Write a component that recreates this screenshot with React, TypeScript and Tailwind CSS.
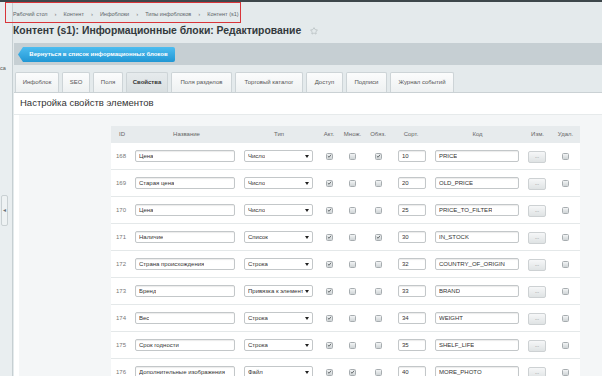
import { Star } from "lucide-react"

type Row = {
  id: number
  name: string
  type: string
  act: boolean
  multi: boolean
  req: boolean
  sort: number
  code: string
}

const rows: Row[] = [
  { id: 168, name: "Цена", type: "Число", act: true, multi: false, req: true, sort: 10, code: "PRICE" },
  { id: 169, name: "Старая цена", type: "Число", act: true, multi: false, req: false, sort: 20, code: "OLD_PRICE" },
  { id: 170, name: "Цена", type: "Число", act: true, multi: false, req: false, sort: 25, code: "PRICE_TO_FILTER" },
  { id: 171, name: "Наличие", type: "Список", act: true, multi: false, req: true, sort: 30, code: "IN_STOCK" },
  { id: 172, name: "Страна происхождения", type: "Строка", act: true, multi: false, req: false, sort: 32, code: "COUNTRY_OF_ORIGIN" },
  { id: 173, name: "Бренд", type: "Привязка к элемент", act: true, multi: false, req: false, sort: 33, code: "BRAND" },
  { id: 174, name: "Вес", type: "Строка", act: true, multi: false, req: false, sort: 34, code: "WEIGHT" },
  { id: 175, name: "Срок годности", type: "Строка", act: true, multi: false, req: false, sort: 35, code: "SHELF_LIFE" },
  { id: 176, name: "Дополнительные изображения", type: "Файл", act: true, multi: true, req: false, sort: 40, code: "MORE_PHOTO" },
]

const crumbs = ["Рабочий стол", "Контент", "Инфоблоки", "Типы инфоблоков", "Контент (s1)"]

const tabs = [
  { label: "Инфоблок", w: "w-[44px]" },
  { label: "SEO", w: "w-[28px]" },
  { label: "Поля", w: "w-[30px]" },
  { label: "Свойства", w: "w-[42px]", active: true },
  { label: "Поля разделов", w: "w-[61px]" },
  { label: "Торговый каталог", w: "w-[68px]" },
  { label: "Доступ", w: "w-[37px]" },
  { label: "Подписи", w: "w-[41px]" },
  { label: "Журнал событий", w: "w-[64px]" },
]

const cols = "grid grid-cols-[22px_107px_78px_22px_25px_26px_40px_93px_27px_29px]"

function Checkbox({ checked }: { checked?: boolean }) {
  return (
    <span className="flex h-[7px] w-[7px] items-center justify-center rounded-[1.5px] border border-[#a7adb0] bg-gradient-to-b from-[#f2f4f5] to-[#cfd4d6]">
      {checked && (
        <svg width="6" height="6" viewBox="0 0 6 6">
          <path d="M1 3.1 L2.5 4.5 L5 1.3" fill="none" stroke="#4a5054" strokeWidth="1" />
        </svg>
      )}
    </span>
  )
}

function Field({ value, className }: { value: string | number; className: string }) {
  return (
    <div
      className={`flex h-[12px] items-center rounded-[2px] border border-[#c3c7c9] bg-white pl-[3px] text-[6px] text-[#333] shadow-[inset_0_1px_1px_rgba(0,0,0,0.08)] ${className}`}
    >
      <span className="truncate">{value}</span>
    </div>
  )
}

export default function App() {
  return (
    <div className="relative flex h-[376px] w-[602px] flex-col overflow-hidden bg-[#e4eaec] font-['Liberation_Sans',Arial,sans-serif] text-[#333]">
      <div className="h-[2px] shrink-0 bg-[#3d474b]" />

      <div className="flex min-h-0 flex-1">
        {/* collapsed side menu */}
        <aside className="relative w-[13px] shrink-0 overflow-hidden border-r border-[#c6cfd2] bg-[#e9eef0]">
          <div className="mt-[64px] text-[5.5px] leading-none text-[#555]">са</div>
          <div className="absolute left-[1px] top-[193px] flex h-[31px] w-[7px] items-center justify-center rounded-[2px] border border-[#c9d0d3] bg-[#eef2f3] text-[6px] text-[#6b7377]">
            ◂
          </div>
        </aside>

        <main className="flex min-w-0 flex-1 flex-col">
          {/* breadcrumbs */}
          <nav className="mt-[6px] flex h-[12px] items-center gap-[7px] text-[5.5px] text-[#5c6468]">
            {crumbs.map((c, i) => (
              <div key={c} className="flex items-center gap-[7px]">
                <span>{c}</span>
                {i < crumbs.length - 1 && <span className="text-[6px] text-[#777]">›</span>}
              </div>
            ))}
          </nav>

          {/* title */}
          <div className="mt-[4px] flex h-[14px] items-center gap-[9px]">
            <h1 className="text-[10.4px] font-bold text-[#33393c]">
              Контент (s1): Информационные блоки: Редактирование
            </h1>
            <Star size={8} strokeWidth={1.6} className="text-[#a3abae]" />
          </div>

          {/* toolbar */}
          <div className="mt-[5px] ml-px h-[22px] shrink-0 bg-[#c6cfd3] pl-[4px] pt-[4px]">
            <button className="flex h-[15px] w-[157px] items-center justify-center rounded-r-[2px] bg-gradient-to-b from-[#4dbdf0] to-[#1f97d4] pl-[4px] text-[6px] font-bold text-white [clip-path:polygon(5px_0,100%_0,100%_100%,5px_100%,0_50%)]">
              Вернуться в список информационных блоков
            </button>
          </div>

          {/* tabs */}
          <div className="mt-[7px] ml-[2px] flex h-[20px] shrink-0 gap-[3px]">
            {tabs.map((t) => (
              <div
                key={t.label}
                className={`${t.w} flex items-center justify-center rounded-t-[2px] border border-b-0 border-[#cdd4d7] text-[6px] ${
                  t.active
                    ? "bg-gradient-to-b from-[#e6ebed] to-[#d9dfe1] font-bold text-[#333]"
                    : "bg-gradient-to-b from-[#fbfcfc] to-[#eef1f2] text-[#555]"
                }`}
              >
                {t.label}
              </div>
            ))}
          </div>

          {/* panel */}
          <section className="ml-px flex min-h-0 flex-1 flex-col border-t border-[#cad1d4] bg-white">
            <div className="flex h-[22px] shrink-0 items-center border-b border-[#e6eaeb] pl-[6px] text-[9.5px] text-[#333]">
              Настройка свойств элементов
            </div>

            <div className="ml-[5px] flex-1 bg-[#f4f6f7] pt-[11px] pl-[92px]">
              <div className="w-[469px] bg-white">
                <div className={`${cols} h-[17px] items-center bg-[#e7ebed] text-[6px] text-[#666]`}>
                  <span className="text-center">ID</span>
                  <span className="text-center">Название</span>
                  <span className="text-center">Тип</span>
                  <span className="text-center">Акт.</span>
                  <span className="text-center">Множ.</span>
                  <span className="text-center">Обяз.</span>
                  <span className="text-center">Сорт.</span>
                  <span className="text-center">Код</span>
                  <span className="text-center">Изм.</span>
                  <span className="text-center">Удал.</span>
                </div>

                {rows.map((r) => (
                  <div key={r.id} className={`${cols} h-[27px] items-center border-b border-[#e4e8e9]`}>
                    <span className="pl-[5px] text-[6px] text-[#777]">{r.id}</span>
                    <div className="pl-[2px]">
                      <Field value={r.name} className="w-[100px]" />
                    </div>
                    <div className="pl-[4px]">
                      <div className="flex h-[12px] w-[69px] items-center justify-between rounded-[2px] border border-[#c3c7c9] bg-white pl-[3px] pr-[3px] text-[6px] text-[#333]">
                        <span className="truncate">{r.type}</span>
                        <svg width="4" height="3" viewBox="0 0 4 3" className="shrink-0">
                          <path d="M0 0 L4 0 L2 3 Z" fill="#222" />
                        </svg>
                      </div>
                    </div>
                    <div className="flex justify-center">
                      <Checkbox checked={r.act} />
                    </div>
                    <div className="flex justify-center">
                      <Checkbox checked={r.multi} />
                    </div>
                    <div className="flex justify-center">
                      <Checkbox checked={r.req} />
                    </div>
                    <div className="pl-[7px]">
                      <Field value={r.sort} className="w-[28px]" />
                    </div>
                    <div className="pl-[4px]">
                      <Field value={r.code} className="w-[84px]" />
                    </div>
                    <div className="pl-[4px]">
                      <div className="mt-[2px] flex h-[12px] w-[18px] items-center justify-center rounded-[2px] border border-[#cdd1d3] bg-gradient-to-b from-[#f6f7f8] to-[#dfe3e4] text-[5px] text-[#777]">
                        ...
                      </div>
                    </div>
                    <div className="flex justify-center">
                      <Checkbox />
                    </div>
                  </div>
                ))}
              </div>
            </div>
          </section>
        </main>
      </div>

      {/* annotation frame round the breadcrumbs */}
      <div className="pointer-events-none absolute left-[5px] top-[2px] h-[21px] w-[236px] border border-[#d8353a]" />
    </div>
  )
}
